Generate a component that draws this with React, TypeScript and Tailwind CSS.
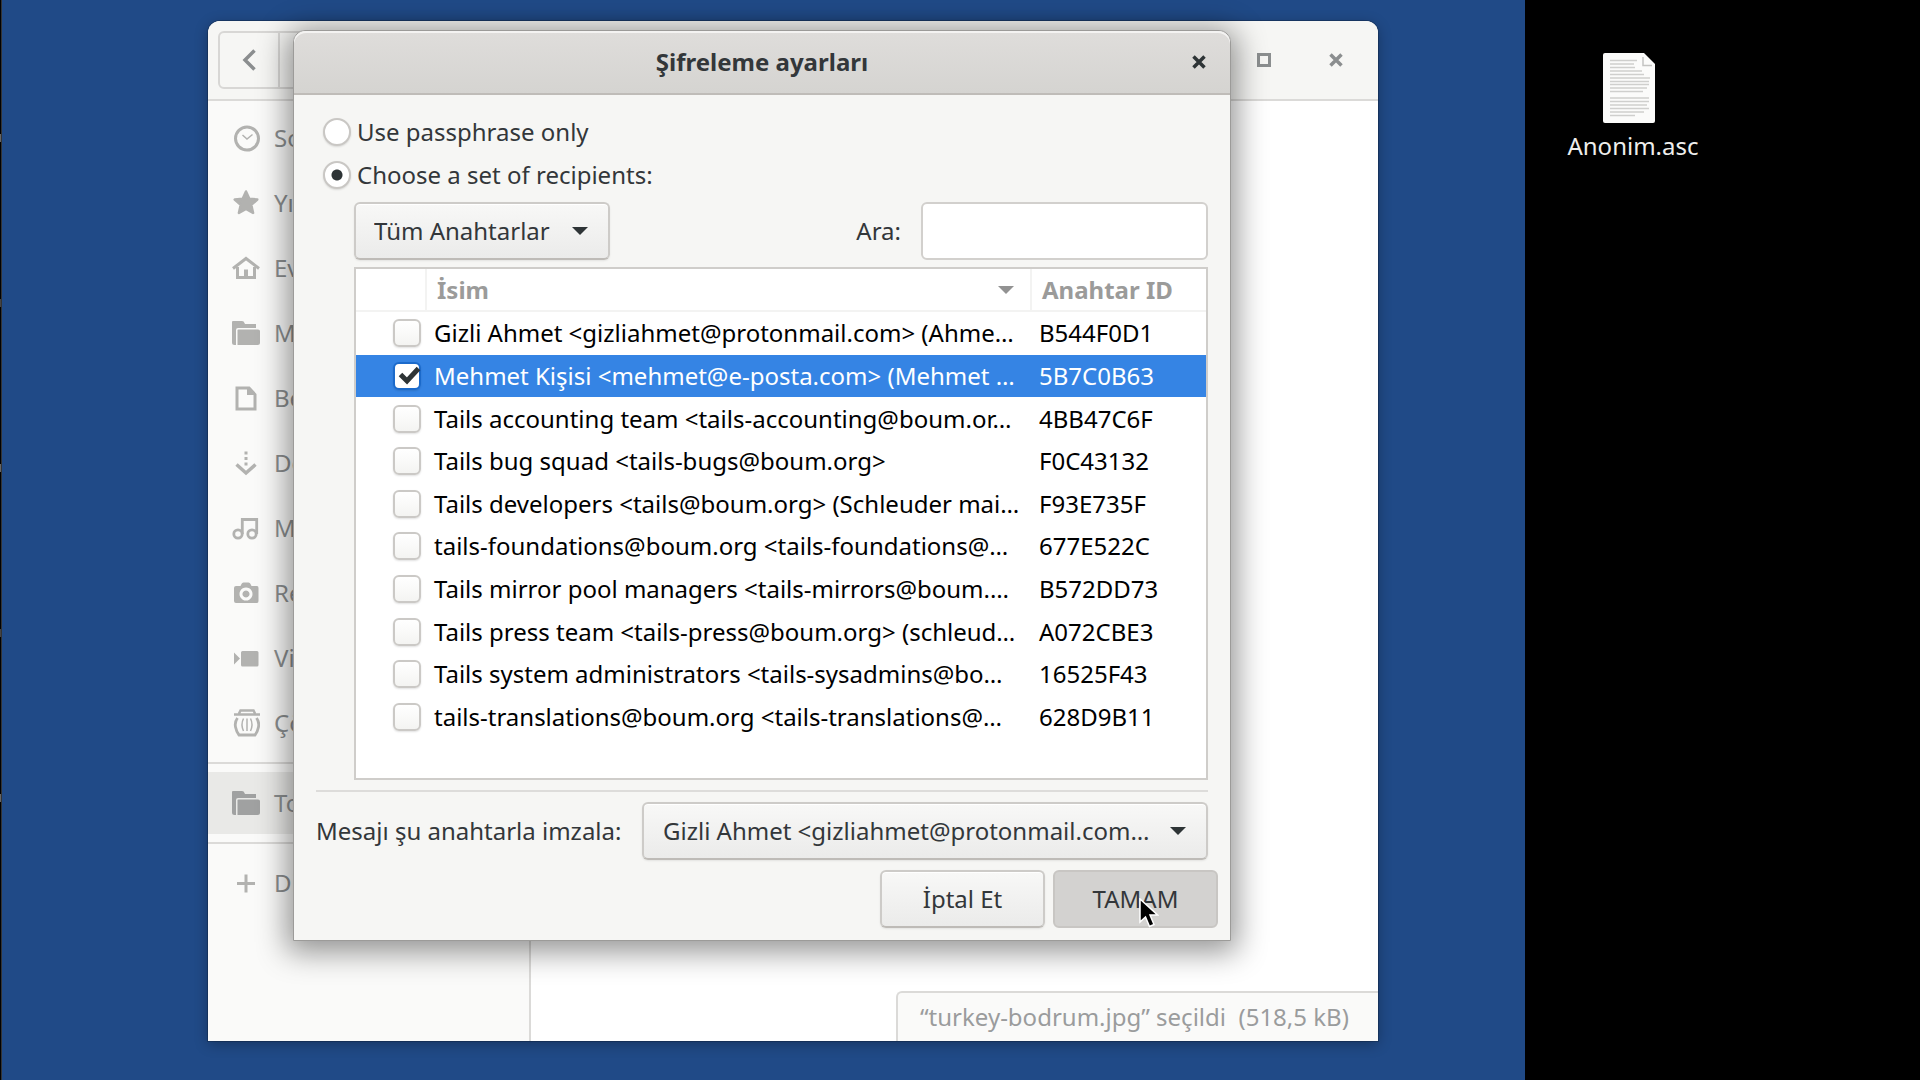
import type { ReactNode } from "react";

const keys: { name: string; id: string; checked?: boolean }[] = [
  { name: "Gizli Ahmet <gizliahmet@protonmail.com> (Ahme…", id: "B544F0D1" },
  { name: "Mehmet Kişisi <mehmet@e-posta.com> (Mehmet …", id: "5B7C0B63", checked: true },
  { name: "Tails accounting team <tails-accounting@boum.or…", id: "4BB47C6F" },
  { name: "Tails bug squad <tails-bugs@boum.org>", id: "F0C43132" },
  { name: "Tails developers <tails@boum.org> (Schleuder mai…", id: "F93E735F" },
  { name: "tails-foundations@boum.org <tails-foundations@…", id: "677E522C" },
  { name: "Tails mirror pool managers <tails-mirrors@boum.…", id: "B572DD73" },
  { name: "Tails press team <tails-press@boum.org> (schleud…", id: "A072CBE3" },
  { name: "Tails system administrators <tails-sysadmins@bo…", id: "16525F43" },
  { name: "tails-translations@boum.org <tails-translations@…", id: "628D9B11" },
];

function Icon({ children }: { children: ReactNode }) {
  return (
    <svg viewBox="0 0 28 28" className="size-7 shrink-0" fill="none" stroke="currentColor" strokeWidth="3" aria-hidden="true">
      {children}
    </svg>
  );
}

const folder = (
  <Icon>
    <path stroke="none" fill="currentColor" d="M1 2h9q2 0 2.500 2l.5 1h11v4H6q-2 0-2 2v15H2.500Q0 26 0 23.500V3q0-1 1-1z" />
    <path stroke="none" fill="currentColor" d="M6.500 10.500H26q2 0 2 1.500v11.500q0 2.500-2.500 2.500H5.500V11.500q0-1 1-1z" />
  </Icon>
);

const places: { label: string; icon: ReactNode }[] = [
  {
    label: "Son",
    icon: (
      <Icon>
        <circle cx="15" cy="14.500" r="11.500" />
        <path strokeWidth="1.500" d="M10.500 11l4.500 4 5.500-4.500" />
      </Icon>
    ),
  },
  {
    label: "Yıldızlı",
    icon: (
      <Icon>
        <path fill="currentColor" strokeWidth="2.500" strokeLinejoin="round" d="M14 2.500l3.300 7.200 8 .8-6 5.400 1.800 8-7.100-4-7.100 4 1.800-8-6-5.400 8-.8z" />
      </Icon>
    ),
  },
  {
    label: "Ev",
    icon: (
      <Icon>
        <path d="M1 14.500L14 4.500l13 10" />
        <path d="M5.500 13v10.500h17V13" />
        <path strokeWidth="4" d="M14 15.500v8" />
      </Icon>
    ),
  },
  { label: "Masaüstü", icon: folder },
  {
    label: "Belgeler",
    icon: (
      <Icon>
        <path d="M5 4h12l6 6.500V25H5z" />
        <path stroke="none" fill="currentColor" d="M15 4h2l6.500 7H15z" />
      </Icon>
    ),
  },
  {
    label: "Downloads",
    icon: (
      <Icon>
        <path strokeDasharray="3 2.500" d="M14 2.500V17" />
        <path strokeWidth="3.500" d="M4.500 15.500l9.500 8.500 9.500-8.500" />
      </Icon>
    ),
  },
  {
    label: "Müzik",
    icon: (
      <Icon>
        <circle cx="6" cy="20" r="4.200" strokeWidth="2.800" />
        <circle cx="20" cy="20" r="4.200" strokeWidth="2.800" />
        <path strokeWidth="2.800" d="M10.300 20V5.500h14.400V20" />
      </Icon>
    ),
  },
  {
    label: "Resimler",
    icon: (
      <Icon>
        <path
          stroke="none"
          fill="currentColor"
          fillRule="evenodd"
          d="M2 9q0-2 2-2h4.500l1-2q.5-1.500 2-1.500h5q1.500 0 2 1.500l1 2H25q1.500 0 1.500 2v13q0 2-1.500 2H4q-2 0-2-2zM14 8.500a6.500 6.500 0 1 0 .01 0zM14 11.500a3.500 3.500 0 1 1-.01 0z"
        />
      </Icon>
    ),
  },
  {
    label: "Videolar",
    icon: (
      <Icon>
        <path stroke="none" fill="currentColor" d="M2 8.500l6 6-6 6zM10.500 7H25q1.500 0 1.500 1.500v12.500q0 1.500-1.500 1.500H10.500q-1.500 0-1.500-1.500V8.500Q9 7 10.500 7z" />
      </Icon>
    ),
  },
  {
    label: "Çöp",
    icon: (
      <Icon>
        <path strokeWidth="2.500" d="M2 5.500h26M7 4.500l1.500-3h13l1.500 3" />
        <path strokeWidth="2.800" d="M5.500 9Q2.500 13 3.500 18q1 5 3.500 8h16q2.500-3 3.500-8 1-5-2-9" />
        <path strokeWidth="1.500" d="M11.500 9.500q-3 6 0 12.500M15 9.500V22M18.500 9.500q3 6 0 12.500" />
      </Icon>
    ),
  },
];

function Place({ icon, label }: { icon: ReactNode; label: string }) {
  return (
    <a href="#" className="flex h-[65px] items-center gap-3.5 pl-6 text-[#8b8e8f]">
      <span className="text-[#b2b2b0]">{icon}</span>
      {label}
    </a>
  );
}

function Caret() {
  return (
    <svg viewBox="0 0 16 8" className="pointer-events-none absolute top-1/2 right-[22px] h-2 w-4 -translate-y-1/2" aria-hidden="true">
      <path d="M0 0h16L8 8z" fill="#2e3436" />
    </svg>
  );
}

const buttonLook =
  "h-[58px] rounded-md border-2 border-[#cdcbc8] border-b-[#bebbb7] bg-linear-to-b from-[#f8f8f7] to-[#ebebea] shadow-[inset_0_1px_#fff,0_1px_2px_rgba(0,0,0,0.08)]";

function CloseIcon({ className }: { className: string }) {
  return (
    <svg viewBox="0 0 14 14" className={className} aria-hidden="true">
      <path d="M1.500 1.500l11 11M12.500 1.500l-11 11" stroke="currentColor" strokeWidth="3.500" />
    </svg>
  );
}

function FilesWindow() {
  return (
    <main className="flex flex-1 flex-col overflow-hidden rounded-t-xl bg-white shadow-[0_0_0_1px_rgba(0,0,0,0.2),0_3px_14px_rgba(0,0,0,0.3)]">
      <header className="flex h-20 items-center border-b-2 border-[#dbdad8] bg-[#f6f6f4] pl-2.5">
        <div className="flex h-[58px] rounded-md border-2 border-[#d8d7d5]">
          <button aria-label="Geri" className="flex w-[60px] items-center justify-center border-r-2 border-[#d8d7d5]">
            <svg viewBox="0 0 14 22" className="h-[22px] w-3.5" aria-hidden="true">
              <path d="M12.500 1.500L3 11l9.500 9.500" fill="none" stroke="#8b8e8f" strokeWidth="3.500" />
            </svg>
          </button>
          <button aria-label="İleri" className="w-[60px]" />
        </div>
        <div className="ml-auto flex items-center gap-14 pr-[34px] text-[#8b8e8f]">
          <button aria-label="Büyüt" className="flex size-4 items-center justify-center">
            <span className="size-3.5 border-3 border-current" />
          </button>
          <button aria-label="Pencereyi kapat" className="flex size-4 items-center justify-center">
            <CloseIcon className="size-3.5" />
          </button>
        </div>
      </header>
      <div className="flex flex-1">
        <nav className="w-[323px] border-r-2 border-[#dbdad8] bg-[#fafaf9] pt-1">
          {places.map((p) => (
            <Place key={p.label} icon={p.icon} label={p.label} />
          ))}
          <hr className="mt-[7px] border-t-2 border-[#dbdad8]" />
          <a href="#" className="my-2 flex h-[62px] items-center gap-3.5 bg-[#e9e9e7] pl-6 text-[#8b8e8f]">
            <span className="text-[#a0a1a1]">{folder}</span>
            Tor
          </a>
          <hr className="mb-1.5 border-t-2 border-[#dbdad8]" />
          <Place
            label="Diğer"
            icon={
              <Icon>
                <path d="M5 14.500h18M14 5.500v18" />
              </Icon>
            }
          />
        </nav>
        <section className="flex flex-1 items-end justify-end">
          <p className="flex h-[50px] w-[482px] items-center justify-start rounded-tl-md border-t-2 border-l-2 border-[#dbdad8] bg-[#fafaf9] pl-[22px] whitespace-pre text-[#9a9c9d]">
            “turkey-bodrum.jpg” seçildi  (518,5 kB)
          </p>
        </section>
      </div>
    </main>
  );
}

function Radio({ label, checked }: { label: string; checked?: boolean }) {
  return (
    <label className="flex h-[43px] items-center gap-1.5">
      <input
        type="radio"
        name="mode"
        defaultChecked={checked}
        className="size-7 appearance-none rounded-full border-2 border-[#c9c7c4] bg-white shadow-[0_1px_2px_rgba(0,0,0,0.12)] checked:bg-[radial-gradient(circle,#2e3436_5px,#fff_6px)]"
      />
      {label}
    </label>
  );
}

function EncryptionDialog() {
  return (
    <section
      role="dialog"
      aria-labelledby="dialog-title"
      className="absolute top-[30px] right-[294px] left-[291px] rounded-t-xl border border-[#9c9b99] bg-[#f6f6f4] text-[#33373a] shadow-[0_5px_30px_6px_rgba(0,0,0,0.42)]"
    >
      <header className="relative flex h-16 items-center justify-center rounded-t-xl border-b-2 border-[#bfbcb8] bg-linear-to-b from-[#dfdddb] to-[#d5d4d1] shadow-[inset_0_2px_#f4f3f2]">
        <h1 id="dialog-title" className="font-bold">
          Şifreleme ayarları
        </h1>
        <button aria-label="Kapat" className="absolute top-6 right-6 text-[#2e3436]">
          <CloseIcon className="size-3.5" />
        </button>
      </header>
      <form className="flex flex-col px-[22px] pt-[15px] pb-3" onSubmit={(e) => e.preventDefault()}>
        <div className="pl-[7px]">
          <Radio label="Use passphrase only" />
          <Radio label="Choose a set of recipients:" checked />
        </div>
        <div className="mt-1.5 flex items-center justify-between pl-[38px]">
          <div className="relative">
            <select aria-label="Anahtar süzgeci" className={`${buttonLook} w-64 appearance-none pl-[18px]`}>
              <option>Tüm Anahtarlar</option>
            </select>
            <Caret />
          </div>
          <label className="flex items-center gap-5">
            Ara:
            <input type="text" className="h-[58px] w-[287px] rounded-md border-2 border-[#d2d0cd] bg-white px-3" />
          </label>
        </div>
        <div className="mt-[7px] ml-[38px] h-[513px] border-2 border-[#cfcdca] bg-white text-black">
          <table className="h-[469px] w-full table-fixed border-collapse text-left">
            <colgroup>
              <col className="w-[70px]" />
              <col />
              <col className="w-[175px]" />
            </colgroup>
            <thead className="text-[#9b9b9a]">
              <tr className="h-[42px] border-b-2 border-[#f3f3f2]">
                <th className="border-r-2 border-[#f3f3f2] p-0" aria-label="Seçim" />
                <th className="border-r-2 border-[#f3f3f2] p-0 pr-4 pl-2.5">
                  <span className="flex items-center justify-between">
                    İsim
                    <svg viewBox="0 0 16 8" className="h-2 w-4" aria-hidden="true">
                      <path d="M0 0h16L8 8z" fill="#929292" />
                    </svg>
                  </span>
                </th>
                <th className="p-0 pl-2.5 whitespace-nowrap">Anahtar ID</th>
              </tr>
            </thead>
            <tbody>
              {keys.map((k) => (
                <tr key={k.id} className={k.checked ? "bg-[#3584e4] text-white" : undefined}>
                  <td className="p-0 pl-[37px]">
                    <span className="relative block size-7">
                      <input
                        type="checkbox"
                        aria-label={k.name}
                        defaultChecked={k.checked}
                        className="block size-7 appearance-none rounded-md border-2 border-[#cbc9c6] bg-linear-to-b from-white to-[#f4f4f2] shadow-[0_1px_2px_rgba(0,0,0,0.12)] peer checked:border-[#1b6acb] checked:from-white checked:to-white"
                      />
                      <svg viewBox="0 0 28 28" className="pointer-events-none absolute inset-0 hidden peer-checked:block" aria-hidden="true">
                        <path d="M7.500 12.500l6.500 6.500L25.500 6.500" fill="none" stroke="#2e3436" strokeWidth="5" />
                      </svg>
                    </span>
                  </td>
                  <td className="p-0 pl-2 whitespace-nowrap">{k.name}</td>
                  <td className="p-0 pl-2">{k.id}</td>
                </tr>
              ))}
            </tbody>
          </table>
        </div>
        <hr className="mt-2.5 border-t-2 border-[#dddcda]" />
        <div className="mt-2.5 flex items-center justify-between">
          <label htmlFor="signer" className="whitespace-nowrap">
            Mesajı şu anahtarla imzala:
          </label>
          <div className="relative">
            <select id="signer" className={`${buttonLook} w-[566px] appearance-none pl-[19px]`}>
              <option>Gizli Ahmet &lt;gizliahmet@protonmail.com…</option>
            </select>
            <Caret />
          </div>
        </div>
        <div className="mt-2.5 -mr-2.5 flex justify-end gap-2">
          <button type="button" className={`${buttonLook} w-[165px]`}>
            İptal Et
          </button>
          <button type="submit" className="h-[58px] w-[165px] rounded-md border-2 border-[#c8c6c3] bg-[#d3d2d0]">
            <span className="relative">
              TAMAM
              <svg viewBox="0 0 20 30" className="absolute top-4 left-[46px] h-[30px] w-5" aria-hidden="true">
                <path d="M1 1v23l5.500-5 4 9.500 4.500-2-4-9.500h7.500z" fill="#000" stroke="#fff" strokeWidth="1.500" />
              </svg>
            </span>
          </button>
        </div>
      </form>
    </section>
  );
}

function DesktopFile() {
  return (
    <a href="#" className="flex w-[216px] flex-col items-center gap-[7px] pt-[53px] text-[#eeeeec]">
      <svg viewBox="0 0 52 70" className="mr-2 h-[70px] w-[52px]" aria-hidden="true">
        <path d="M2 0h39l11 11v57q0 2-2 2H2q-2 0-2-2V2q0-2 2-2z" fill="#fbfbfa" />
        <path d="M40 4v8.500h9" fill="none" stroke="#c4c4c2" strokeWidth="1.500" />
        <path
          d="M7 7.500h27M7 11h24M7 14.500h25M7 18h32M7 21.500h34M7 25h40M7 28.500h39M7 31.500h39M7 35h37M7 38.500h33M7 45h39M7 48.500h39M7 52h37M7 55.500h39M7 59h34M7 62.500h25"
          stroke="#cfcfcd"
          strokeWidth="1.500"
        />
      </svg>
      Anonim.asc
    </a>
  );
}

export default function App() {
  return (
    <div className="flex min-h-screen bg-black font-['Noto_Sans',sans-serif] text-[24px] leading-8">
      <div className="flex w-0.5 flex-col gap-[157px] border-r border-[#333] pt-[134px]">
        <span className="h-2 bg-[#666]" />
        <span className="h-2 bg-[#444]" />
        <span className="h-2 bg-[#666]" />
        <span className="h-2 bg-[#444]" />
        <span className="h-2 bg-[#666]" />
      </div>
      <div className="relative flex flex-1 bg-[#204a87] pt-[21px] pr-[147px] pb-[39px] pl-[206px]">
        <FilesWindow />
        <EncryptionDialog />
      </div>
      <aside className="w-[395px]">
        <DesktopFile />
      </aside>
    </div>
  );
}
